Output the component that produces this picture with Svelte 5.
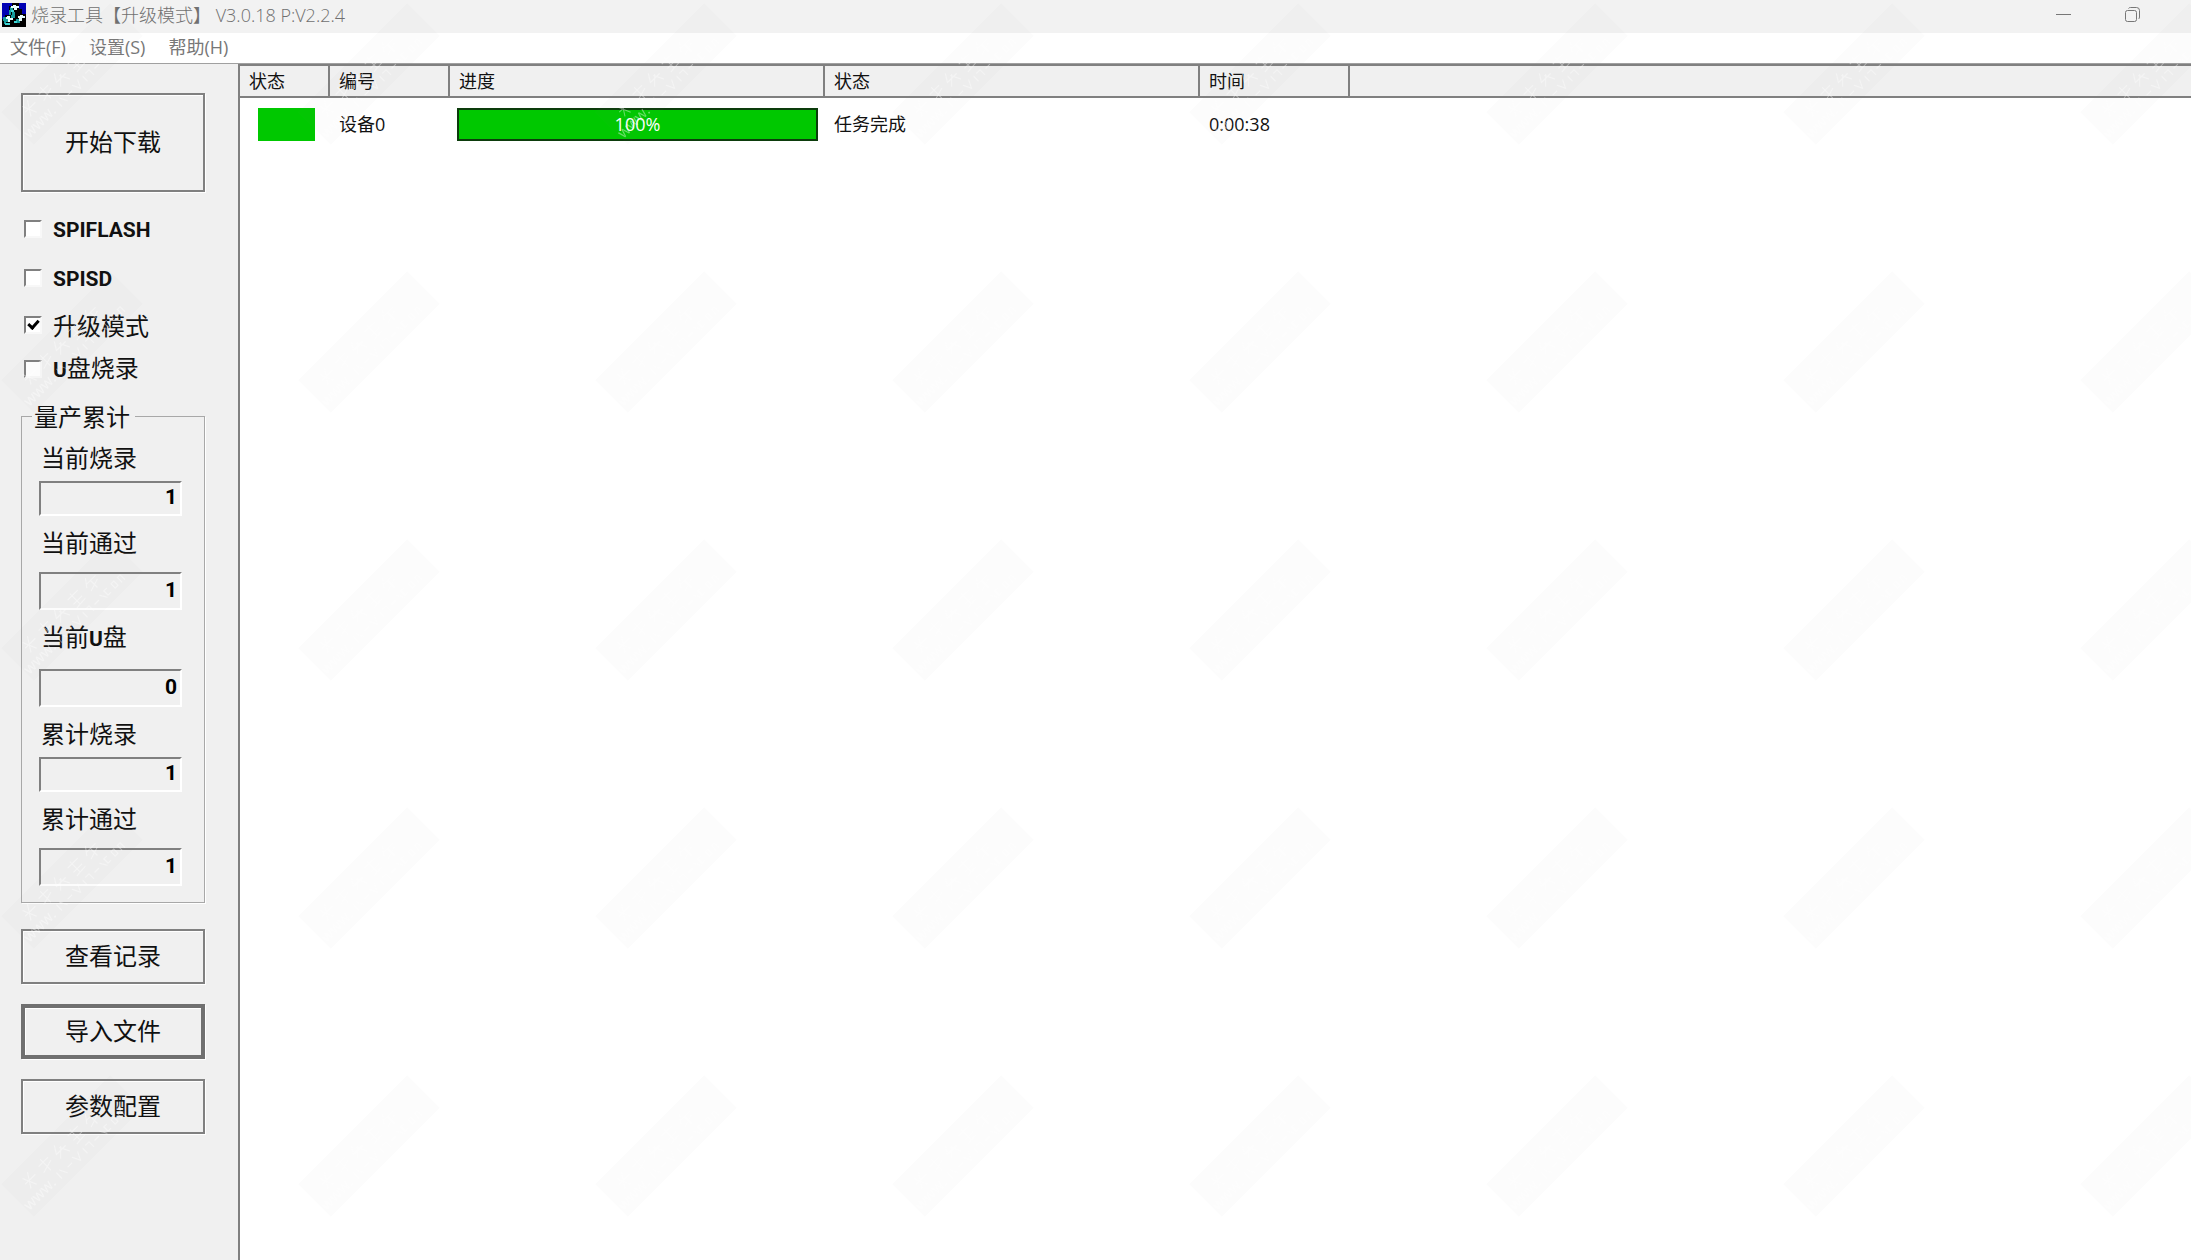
<script>
    let options = $state([
        { id: "spiflash", latin: "SPIFLASH", text: "", checked: false },
        { id: "spisd", latin: "SPISD", text: "", checked: false },
        { id: "upgrade", latin: "", text: "升级模式", checked: true },
        { id: "udisk", latin: "U", text: "盘烧录", checked: false }
    ]);

    const counters = [
        { id: "cur-burn", before: "当前烧录", latin: "", after: "", value: 1, tall: false },
        { id: "cur-pass", before: "当前通过", latin: "", after: "", value: 1, tall: true },
        { id: "cur-udisk", before: "当前", latin: "U", after: "盘", value: 0, tall: true },
        { id: "sum-burn", before: "累计烧录", latin: "", after: "", value: 1, tall: false },
        { id: "sum-pass", before: "累计通过", latin: "", after: "", value: 1, tall: true }
    ];

    const menus = ["文件(F)", "设置(S)", "帮助(H)"];

    const devices = [
        { name: "设备0", progress: 100, status: "任务完成", time: "0:00:38" }
    ];
</script>

<div class="window">
    <header class="titleBar">
        <svg class="appIcon" viewBox="0 0 24 24" aria-hidden="true" shape-rendering="crispEdges">
            <rect width="24" height="24" fill="#000" />
            <path d="M0 0h10v3h-3v9h-4v4h-3z M17 0h7v11h-4v-5h-3z" fill="#0000b4" />
            <path d="M8 4h3v3h-2v5h-2v-5h1z M10 9h3v6h-2v2h-2v-5h1z M1 14h3v2h2v3h-2v2h-2v-3h-1z M14 16h4v-3h2v3h-2v4h-4z" fill="#169c9c" />
            <path d="M11 2h3v1h3v2h-2v2h-3v-2h-3v-2h2z M5 13h3v2h3v2h-3v2h-2v-3h-2z M18 12h3v1h2v2h-3v3h-3v-3h-1v-2h2z" fill="#e8ffff" />
            <path d="M3 20h5v2h-5z M12 18h3v2h-3z M9 7h3v2h-3z" fill="#3fd6d6" />
        </svg>
        <h1>烧录工具【升级模式】 V3.0.18 P:V2.2.4</h1>
        <div class="windowButtons">
            <button aria-label="最小化">
                <svg width="16" height="16" viewBox="0 0 16 16"><path d="M0 7.5h15" /></svg>
            </button>
            <button aria-label="还原">
                <svg width="16" height="16" viewBox="0 0 16 16">
                    <rect x="0.5" y="3.5" width="11" height="11" rx="2" />
                    <path d="M3.5 1.5Q4 .5 5.5 .5H11.5Q14.5 .5 14.5 3.5V10Q14.5 11.5 13.5 12" />
                </svg>
            </button>
        </div>
    </header>

    <nav class="menuBar">
        {#each menus as menu}
            <button>{menu}</button>
        {/each}
    </nav>

    <div class="body">
        <aside class="sidebar">
            <button class="action start">开始下载</button>

            <div class="options">
                {#each options as option}
                    <label for={option.id}>
                        <input type="checkbox" id={option.id} bind:checked={option.checked} />
                        <span>{#if option.latin}<b>{option.latin}</b>{/if}{option.text}</span>
                    </label>
                {/each}
            </div>

            <fieldset>
                <legend>量产累计</legend>
                {#each counters as counter}
                    <div class="counter" class:tall={counter.tall}>
                        <label for={counter.id}>{counter.before}{#if counter.latin}<b>{counter.latin}</b>{/if}{counter.after}</label>
                        <input type="text" id={counter.id} value={counter.value} readonly />
                    </div>
                {/each}
            </fieldset>

            <div class="actions">
                <button class="action">查看记录</button>
                <button class="action current">导入文件</button>
                <button class="action">参数配置</button>
            </div>
        </aside>

        <main>
            <table>
                <colgroup>
                    <col class="colState" />
                    <col class="colName" />
                    <col class="colWide" />
                    <col class="colWide" />
                    <col class="colTime" />
                    <col />
                </colgroup>
                <thead>
                    <tr>
                        <th>状态</th>
                        <th>编号</th>
                        <th>进度</th>
                        <th>状态</th>
                        <th>时间</th>
                        <td></td>
                    </tr>
                </thead>
                <tbody>
                    {#each devices as device}
                        <tr>
                            <td class="stateCell"><div class="stateBox"></div></td>
                            <td>{device.name}</td>
                            <td class="progressCell">
                                <div class="progress">
                                    <div class="bar" style="width: {device.progress}%">{device.progress}%</div>
                                </div>
                            </td>
                            <td>{device.status}</td>
                            <td>{device.time}</td>
                            <td></td>
                        </tr>
                    {/each}
                </tbody>
            </table>
        </main>
    </div>

    <svg class="watermark" aria-hidden="true">
        <defs>
            <pattern id="mark" width="297" height="268" patternUnits="userSpaceOnUse" x="220" y="208">
                <g transform="translate(149 134) rotate(-45)">
                    <rect x="-77" y="-23" width="154" height="46" fill="#777" fill-opacity="0.025" />
                    <g fill="none" stroke="#fff" stroke-opacity="0.4" stroke-width="1">
                        <path d="M-58 -12l6 14M-50 -13l-9 14M-60 -6h14M-32 -13v15M-38 -9h13M-39 -1l14 -4M-12 -13l-5 8h13M-10 -8l5 10M-17 1l9 -9M10 -13v14M4 -10h14M5 -3h12M5 2l13 -1M32 -13l-6 8M28 -8h13M34 -8v10M27 0l13 -4" />
                        <path d="M-30 8v8M-26 8l4 8M-18 12h6M-8 8l4 8l4 -8M6 9v7M10 9h5v7M20 12h6M30 9l4 7M40 9h-4v6h4M46 9h4v6h-4zM55 16v-7h4v7" />
                    </g>
                    <text x="-76" y="16">www.</text>
                </g>
            </pattern>
        </defs>
        <rect width="100%" height="100%" fill="url(#mark)" />
    </svg>
</div>

<style>
    :global(body) {
        background: #fff;
    }

    .window {
        position: relative;
        display: flex;
        flex-direction: column;
        min-height: 100vh;
        font-family: "Open Sans", "Noto Sans CJK SC", sans-serif;
        font-size: 18px;
        line-height: 24px;
        color: #111;
    }

    button {
        font: inherit;
        color: inherit;
        padding: 0;
        border: none;
        background: none;
    }

    .titleBar {
        display: flex;
        align-items: center;
        height: 33px;
        padding: 0 50px 3px 2px;
        background: #f2f2f2;
        box-sizing: border-box;
    }

    .appIcon {
        width: 24px;
        height: 24px;
        flex-shrink: 0;
    }

    h1 {
        margin: 0 auto 0 5px;
        font-size: 18px;
        font-weight: 300;
        color: #707070;
        white-space: nowrap;
    }

    .windowButtons {
        display: flex;
        gap: 53px;
    }

    .windowButtons button {
        display: flex;
    }

    .windowButtons svg {
        fill: none;
        stroke: #777;
        stroke-width: 1;
    }

    .menuBar {
        display: flex;
        gap: 23px;
        height: 31px;
        padding: 0 10px 2px;
        box-sizing: border-box;
        background: #fff;
        color: #777;
        border-bottom: 1px solid #a0a0a0;
    }

    .body {
        display: flex;
        flex: 1;
    }

    .sidebar {
        width: 238px;
        flex-shrink: 0;
        padding: 29px 33px 24px 21px;
        box-sizing: border-box;
        background: #f0f0f0;
        font-family: "Noto Sans CJK SC", sans-serif;
        font-size: 24px;
        font-weight: 400;
        line-height: 32px;
    }

    .sidebar b {
        font-family: Roboto, sans-serif;
        font-size: 21px;
        font-weight: 700;
    }

    .action {
        display: block;
        width: 100%;
        height: 55px;
        padding-bottom: 3px;
        border: 2px solid #808080;
        box-shadow: 1px 1px 0 #fff, inset 1px 1px 0 #fff;
        background: #f0f0f0;
    }

    .action.start {
        height: 99px;
    }

    .action.current {
        border: 4px solid #707070;
    }

    .options {
        display: flex;
        flex-direction: column;
        gap: 10px;
        margin: 19px 0 0 3px;
    }

    .options label {
        display: flex;
        align-items: center;
        gap: 11px;
    }

    .options label:nth-child(-n + 2) {
        margin-bottom: 4px;
    }

    .options input {
        appearance: none;
        position: relative;
        width: 18px;
        height: 18px;
        margin: 0;
        border: 2px solid #808080;
        border-right-color: #f8f8f8;
        border-bottom-color: #f8f8f8;
        background: #fff;
    }

    .options input:checked::after {
        content: "";
        position: absolute;
        left: 4px;
        top: 0;
        width: 4px;
        height: 8px;
        border: solid #000;
        border-width: 0 3px 3px 0;
        transform: rotate(42deg);
    }

    fieldset {
        display: flex;
        flex-direction: column;
        gap: 10px;
        margin: 14px 0 26px;
        padding: 9px 22px 16px 17px;
        border: 1px solid #a8a8a8;
        box-shadow: 1px 1px 0 #fff;
    }

    legend {
        margin-left: -7px;
        padding: 0 5px 0 2px;
    }

    .counter {
        display: flex;
        flex-direction: column;
        gap: 8px;
    }

    .counter label {
        padding-left: 2px;
    }

    .counter input {
        width: 100%;
        height: 35px;
        box-sizing: border-box;
        padding: 0 3px 3px;
        border: 2px solid #808080;
        border-right-color: #fff;
        border-bottom-color: #fff;
        background: transparent;
        color: #000;
        font: bold 21px Roboto, sans-serif;
        text-align: right;
    }

    .counter.tall {
        gap: 14px;
    }

    .counter.tall input {
        height: 38px;
    }

    .actions {
        display: flex;
        flex-direction: column;
        gap: 20px;
    }

    main {
        flex: 1;
        min-width: 0;
        border-left: 2px solid #808080;
        background: #fff;
    }

    table {
        width: 100%;
        table-layout: fixed;
        border-collapse: separate;
        border-spacing: 0;
    }

    .colState {
        width: 90px;
    }

    .colName {
        width: 120px;
    }

    .colWide {
        width: 375px;
    }

    .colTime {
        width: 150px;
    }

    th,
    td {
        padding: 0 9px;
        text-align: left;
        font-weight: 400;
        white-space: nowrap;
    }

    thead th,
    thead td {
        height: 30px;
        background: #f0f0f0;
        border-top: 2px solid #808080;
        border-bottom: 2px solid #808080;
    }

    thead th {
        border-right: 2px solid #808080;
    }

    tbody td {
        height: 52px;
    }

    .stateCell {
        padding: 0 15px 0 18px;
    }

    .stateBox {
        height: 33px;
        background: #00c800;
    }

    .progressCell {
        padding: 0 7px;
    }

    .progress {
        height: 33px;
        box-sizing: border-box;
        border: 2px solid #0c3c0c;
    }

    .bar {
        height: 100%;
        display: flex;
        align-items: center;
        justify-content: center;
        background: #00c800;
        color: #fff;
    }

    .watermark {
        position: absolute;
        inset: 0;
        width: 100%;
        height: 100%;
        pointer-events: none;
    }

    .watermark text {
        font-size: 15px;
        fill: #fff;
        fill-opacity: 0.4;
    }
</style>
